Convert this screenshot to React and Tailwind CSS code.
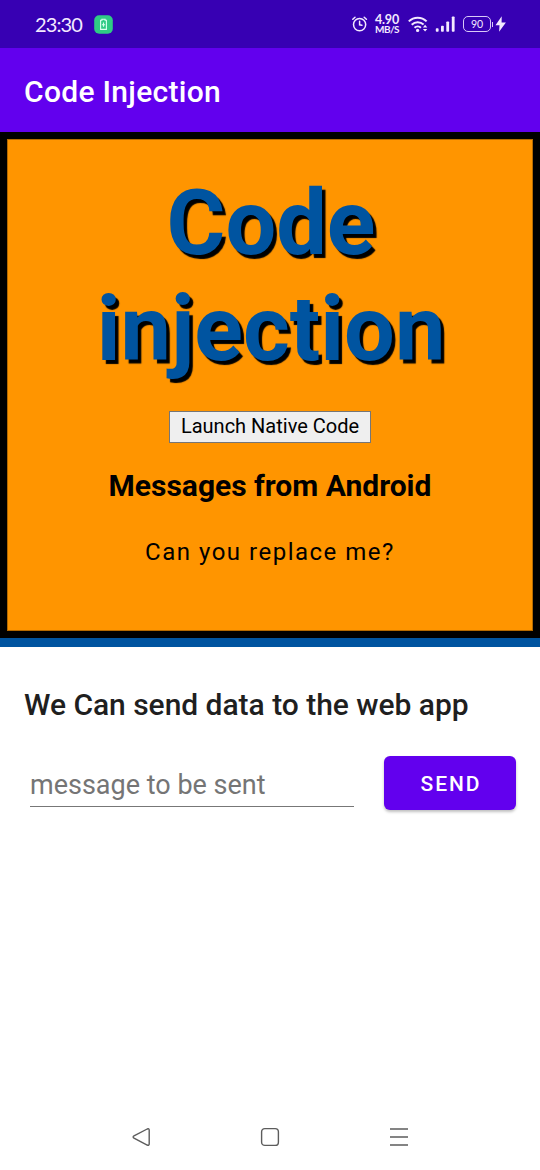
function StatusBar() {
  return (
    <div className="flex h-12 items-center bg-[#3700b3] pl-[35px] pr-[34px] text-[#f3e9ff]">
      <span className="w-[47px] whitespace-nowrap pb-px font-['Lato','Roboto',sans-serif] text-[20px] leading-6 tracking-[-0.9px]">23:30</span>
      <svg className="ml-3 h-[19px] w-[19px]" viewBox="0 0 19 19" fill="none">
        <rect x="0.2" y="0.2" width="18.6" height="18.6" rx="5" fill="#2fcb85" />
        <path d="M6.6 5.3h1.3V4.2h3.2v1.1h1.3v9.1H6.6z" stroke="#d9fff0" strokeWidth="1.1" />
        <path d="M9.5 7.6v4.2M7.9 9.7h3.2" stroke="#d9fff0" strokeWidth="1.1" />
      </svg>
      <div className="ml-auto flex items-center">
        <svg className="h-4 w-4" viewBox="0 0 16 16" fill="none" stroke="currentColor" strokeWidth="1.5" strokeLinecap="round">
          <circle cx="7.6" cy="8.6" r="6.1" />
          <path d="M7.6 5.3v3.5l2.3.5M.8 3.2 3 1.2M14.4 3.2l-2.2-2" />
        </svg>
        <div className="ml-[7px] flex w-6 flex-col items-center whitespace-nowrap font-['Lato','Roboto',sans-serif] font-bold">
          <span className="text-[12.5px] leading-[11px] tracking-[-0.2px]">4.90</span>
          <span className="text-[10px] leading-[9px] tracking-[-0.6px]">MB/S</span>
        </div>
        <svg className="ml-[9px] h-[17px] w-5" viewBox="0 0 20 17" fill="none" stroke="currentColor" strokeWidth="2">
          <path d="M.8 5.4c5-5 12.8-5 17.8 0M3.7 8.8c3.4-3.3 8.4-3.4 11.9-.3M6.5 11.8c1.9-1.8 4.7-1.8 6.4-.1" />
          <circle cx="9.6" cy="14.4" r="1.6" fill="currentColor" stroke="none" />
          <path d="m14.9 11.4 2.2-2.6 2.2 2.6zM14.9 13l2.2 2.6 2.2-2.6z" fill="currentColor" stroke="none" />
        </svg>
        <svg className="ml-[7px] h-4 w-5" viewBox="0 0 20 16" fill="currentColor">
          <rect x="0.8" y="12.2" width="2.8" height="3.5" rx="0.8" />
          <rect x="6" y="9.7" width="2.8" height="6" rx="0.8" />
          <rect x="11.3" y="5.5" width="2.8" height="10.2" rx="0.8" />
          <rect x="16.8" y="0.5" width="2.8" height="15.2" rx="0.8" />
        </svg>
        <div className="ml-2 flex items-center">
          <div className="flex h-4 w-7 items-center justify-center rounded-[5px] border-[1.5px] border-[#d9c9f8]">
            <span className="font-['Lato','Roboto',sans-serif] text-[10.5px] leading-3">90</span>
          </div>
          <div className="ml-px h-[5px] w-px bg-[#d9c9f8]" />
          <svg className="ml-[2px] h-4 w-[11px]" viewBox="0 0 11 16" fill="currentColor">
            <path d="M6.7.2.5 9.3h4L4.1 15.8l6.8-9.3H6.6z" />
          </svg>
        </div>
      </div>
    </div>
  );
}

function WebPanel() {
  return (
    <section className="flex h-[515px] flex-col border-b-[9px] border-[#0054a0] bg-black">
      <div className="flex flex-1 flex-col p-[7px]">
        <div className="flex flex-1 flex-col items-center border border-[#b56a00] bg-[#ff9500] pt-[31px] text-center text-black">
          <h1 className="w-[400px] pl-[2px] text-[90px] font-bold leading-[106px] text-[#0054a0] [text-shadow:3.5px_3.5px_1px_#000]">
            Code injection
          </h1>
          <button className="mt-7 h-8 w-[202px] whitespace-nowrap border border-[#767676] bg-[#efefef] pb-[2px] text-[20px] leading-6">
            Launch Native Code
          </button>
          <h2 className="mt-[27px] whitespace-nowrap text-[30px] font-bold leading-8">Messages from Android</h2>
          <p className="mt-9 whitespace-nowrap text-[24px] leading-7 tracking-[1.5px]">Can you replace me?</p>
        </div>
      </div>
    </section>
  );
}

function NavBar() {
  return (
    <nav className="flex h-[66px] items-center justify-center gap-[109px] text-[#5c5c5c]">
      <svg className="h-5 w-5" viewBox="0 0 20 20" fill="none" stroke="currentColor" strokeWidth="1.4">
        <path d="M16.2 2 3 8.8Q1.3 10 3 11.2L16.2 18Q18.2 18.8 18.2 17V3Q18.2 1.2 16.2 2z" />
      </svg>
      <svg className="h-5 w-5" viewBox="0 0 20 20" fill="none" stroke="currentColor" strokeWidth="1.4">
        <rect x="1.6" y="1.6" width="16.8" height="16.8" rx="3.2" />
      </svg>
      <svg className="h-5 w-5" viewBox="0 0 20 20" fill="none" stroke="currentColor" strokeWidth="1.4">
        <path d="M1 2h18M1 10h18M1 18h18" />
      </svg>
    </nav>
  );
}

export default function App() {
  return (
    <main className="flex h-[1170px] w-[540px] flex-col overflow-hidden bg-white font-['Roboto',sans-serif]">
      <StatusBar />
      <header className="flex h-[84px] items-center bg-[#6200ee] pl-6 pt-[2px] text-[30px] font-medium tracking-[0.3px] text-white">
        Code Injection
      </header>
      <WebPanel />
      <section className="px-6 pt-10">
        <h2 className="whitespace-nowrap text-[30px] font-medium leading-9 tracking-[-0.03px] text-[#1f1f1f]">We Can send data to the web app</h2>
        <form className="mt-[33px] flex items-start justify-between">
          <input
            className="ml-[6px] h-[51px] w-[324px] border-b-[1.5px] border-[#777] pt-[7px] text-[27px] text-[#757575] outline-none placeholder:text-[#757575]"
            placeholder="message to be sent"
          />
          <button type="button" className="h-[54px] w-[132px] rounded-[6px] bg-[#6200ee] pl-[2px] pt-[3px] text-[21px] font-medium tracking-[1.9px] text-white shadow-[0_2px_3px_rgba(0,0,0,0.25)]">
            SEND
          </button>
        </form>
      </section>
      <div className="flex-1" />
      <NavBar />
    </main>
  );
}
